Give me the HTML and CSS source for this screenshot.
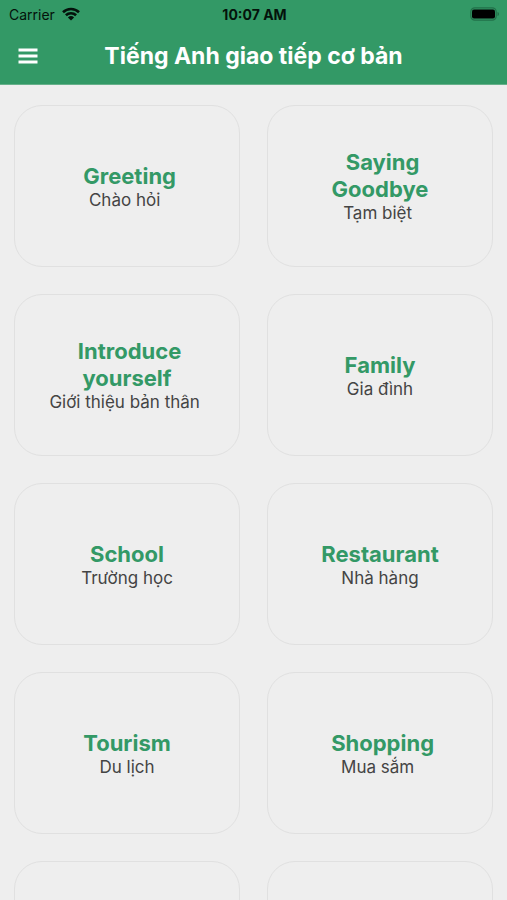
FILE: index.html
```
<!DOCTYPE html>
<html lang="vi">
<head>
    <meta charset="UTF-8">
    <meta name="viewport" content="width=device-width, initial-scale=1.0">
    <title>Tiếng Anh giao tiếp cơ bản</title>
    <link rel="stylesheet" href="styles.css">
</head>
<body>
    <header class="header">
        <div class="status-bar">
            <div class="carrier">
                <span>Carrier</span>
                <svg class="wifi" viewBox="0 0 18 14" aria-hidden="true">
                    <path d="M1 5.200a11.500 11.500 0 0 1 16 0M3.900 8.300a7.300 7.300 0 0 1 10.200 0" fill="none" stroke="#04120b" stroke-width="2.600"/>
                    <path d="M9 13.600l-3.100-3.200a4.500 4.500 0 0 1 6.200 0z" fill="#04120b"/>
                </svg>
            </div>
            <span class="time">10:07 AM</span>
            <svg class="battery" viewBox="0 0 30 14" aria-hidden="true">
                <rect x="0.800" y="0.800" width="25.400" height="12.400" rx="4" fill="none" stroke="#227049" stroke-width="1.200"/>
                <rect x="2" y="2.500" width="23" height="9" rx="2" fill="#000"/>
                <path d="M27.500 5v4c1-.4 1.500-1.200 1.500-2s-.5-1.600-1.500-2z" fill="#227049"/>
            </svg>
        </div>
        <div class="nav-bar">
            <button class="menu-btn" aria-label="Menu">
                <svg viewBox="0 0 20 16" aria-hidden="true">
                    <path d="M0.500 2h19M0.500 8h19M0.500 14h19" stroke="#fff" stroke-width="2.800"/>
                </svg>
            </button>
            <h1 class="title">Tiếng Anh giao tiếp cơ bản</h1>
        </div>
    </header>

    <main class="topics">
        <button class="card"><span class="name">&nbsp;Greeting</span><span class="meaning">Chào hỏi&nbsp;</span></button>
        <button class="card"><span class="name">&nbsp;Saying Goodbye</span><span class="meaning">Tạm biệt&nbsp;</span></button>
        <button class="card"><span class="name">&nbsp;Introduce yourself</span><span class="meaning">Giới thiệu bản thân&nbsp;</span></button>
        <button class="card"><span class="name">Family</span><span class="meaning">Gia đình</span></button>
        <button class="card"><span class="name">School</span><span class="meaning">Trường học</span></button>
        <button class="card"><span class="name">Restaurant</span><span class="meaning">Nhà hàng</span></button>
        <button class="card"><span class="name">Tourism</span><span class="meaning">Du lịch</span></button>
        <button class="card"><span class="name">&nbsp;Shopping</span><span class="meaning">Mua sắm&nbsp;</span></button>
        <button class="card"></button>
        <button class="card"></button>
    </main>
</body>
</html>
```
FILE: styles.css
```
* {
    box-sizing: border-box;
}

body {
    margin: 0;
    height: 100vh;
    overflow: hidden;
    display: flex;
    flex-direction: column;
    background: #eeeeee;
    font-family: Inter, Roboto, sans-serif;
}

.header {
    flex: none;
    background: #339966;
}

.status-bar {
    display: grid;
    grid-template-columns: 1fr auto 1fr;
    align-items: center;
    height: 28px;
    padding: 0 7px 0 9px;
    font-size: 14px;
    color: #04120b;
}

.carrier {
    display: flex;
    align-items: center;
    gap: 7px;
}

.wifi {
    width: 18px;
    height: 14px;
}

.time {
    font-weight: 700;
}

.battery {
    justify-self: end;
    width: 30px;
    height: 14px;
}

.nav-bar {
    display: grid;
    grid-template-columns: 40px 1fr 40px;
    align-items: center;
    height: 57px;
    padding: 0 8px;
    border-bottom: 1px solid #66b08a;
}

.menu-btn {
    height: 40px;
    padding: 0;
    border: none;
    background: none;
    cursor: pointer;
}

.menu-btn svg {
    display: block;
    width: 20px;
    height: 16px;
    margin: 0 auto;
}

.title {
    margin: 0;
    font-size: 23px;
    font-weight: 700;
    line-height: 30px;
    text-align: center;
    white-space: nowrap;
    color: #fff;
}

.topics {
    flex: 1;
    min-height: 0;
    overflow: hidden;
    display: grid;
    grid-template-columns: repeat(2, minmax(0, 1fr));
    grid-auto-rows: 162px;
    gap: 27px;
    padding: 20px 14px;
}

.card {
    display: flex;
    flex-direction: column;
    align-items: center;
    justify-content: center;
    padding: 0 48px;
    border: 1px solid #e0e0e0;
    border-radius: 28px;
    background: none;
    font-family: inherit;
    text-align: center;
    cursor: pointer;
}

.name {
    font-size: 22px;
    font-weight: 700;
    line-height: 27px;
    color: #339966;
}

.meaning {
    font-size: 17px;
    line-height: 20px;
    white-space: nowrap;
    color: #444;
}
```
